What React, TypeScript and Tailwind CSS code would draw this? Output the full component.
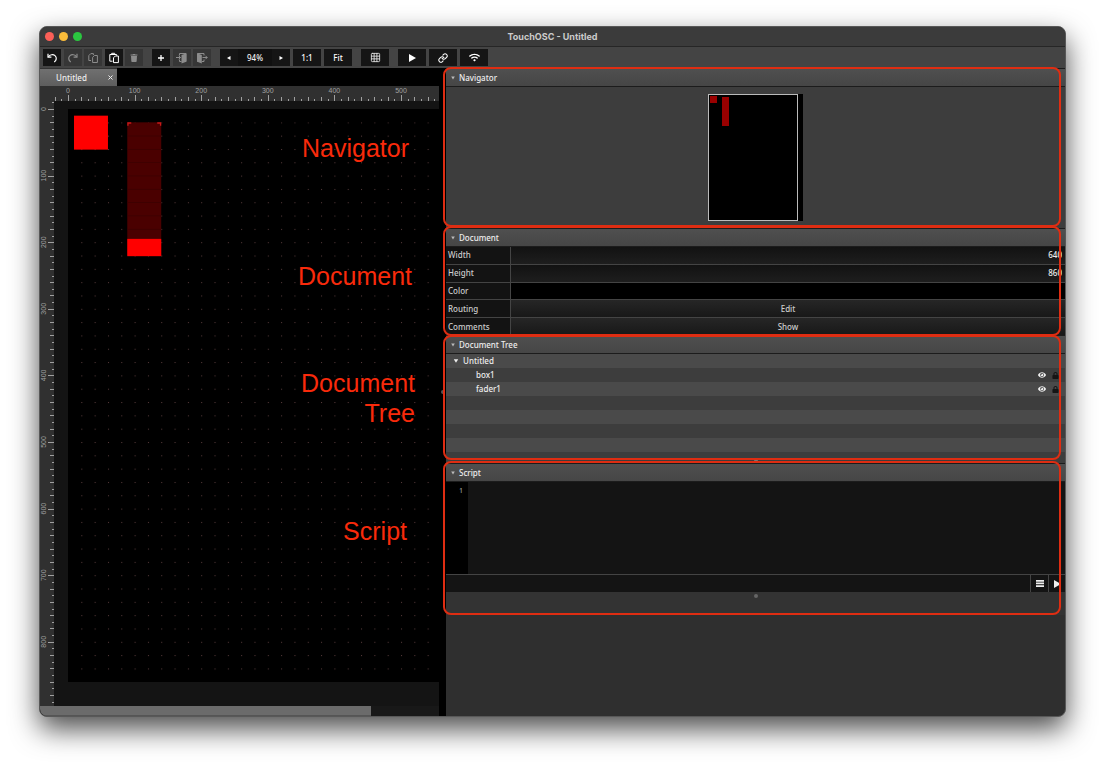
import type { ReactNode } from "react";
import { Grid3x3, Link } from "lucide-react";
import { FaEye, FaLock, FaTrash, FaWifi } from "react-icons/fa";

const SCALE = 0.666;
const DOC_WIDTH = 640;
const DOC_HEIGHT = 860;

const range = (from: number, to: number) =>
  Array.from({ length: to - from + 1 }, (_, i) => from + i);

const tickLength = (step: number) => {
  if (step % 10 === 0) return 6;
  return step % 2 === 0 ? 4 : 2;
};

const UndoIcon = ({ flip = false }: { flip?: boolean }) => (
  <svg
    viewBox="0 0 12 12"
    className={flip ? "w-3 h-3 -scale-x-100" : "w-3 h-3"}
    fill="none"
    stroke="currentColor"
    strokeWidth="1.2"
  >
    <path d="M2 1.8v3.4h3.4" />
    <path d="M2.4 4.8C4 2.6 7 2 9 3.6c2 1.700 1.600 5-.8 6.400" />
  </svg>
);

const CopyIcon = () => (
  <svg viewBox="0 0 12 12" className="w-3 h-3" fill="none" stroke="currentColor">
    <path d="M4 8.500H1.800V3.600L3.800 1.600H6.400V3" />
    <path d="M5.600 10.500V5.400L7.400 3.500H10.400V10.500Z" />
  </svg>
);

const PasteIcon = () => (
  <svg viewBox="0 0 12 12" className="w-3 h-3" fill="none" stroke="currentColor">
    <path d="M4.500 9.200H1.800V2.500H8.600V3.600M3.700 2.500V1.300H6.700V2.500" />
    <path d="M5.500 10.600V5.800L7.300 4H10.400V10.600Z" />
  </svg>
);

const DoorInIcon = () => (
  <svg viewBox="0 0 12 12" className="w-3 h-3" fill="none" stroke="currentColor">
    <path d="M3.500 3.500V1.500H10V9.500H9M3.500 7.500V9.500H5.500" />
    <path d="M5.500 3L10.300 1.300V9.800L5.500 11.500Z" fill="currentColor" stroke="none" />
    <path d="M0 5.500H4.500M2.800 3.800L4.500 5.500L2.800 7.200" />
  </svg>
);

const DoorOutIcon = () => (
  <svg viewBox="0 0 12 12" className="w-3 h-3" fill="none" stroke="currentColor">
    <path d="M8 3.500V1.500H1.500V9.500H3M8 7.500V9.500H6" />
    <path d="M1.200 1.300L5.800 3V11.500L1.200 9.800Z" fill="currentColor" stroke="none" />
    <path d="M6.500 5.500H11.200M9.500 3.800L11.200 5.500L9.500 7.200" />
  </svg>
);

const PlayIcon = () => (
  <svg viewBox="0 0 8 8" className="w-2 h-2" fill="currentColor">
    <path d="M1 0L8 4L1 8Z" />
  </svg>
);

const Arrow = ({ d }: { d: string }) => (
  <svg viewBox="0 0 6 6" className="w-[6px] h-[6px]" fill="currentColor">
    <path d={d} />
  </svg>
);

const LEFT = "M4.500 1V5L1 3Z";
const RIGHT = "M1.500 1V5L5 3Z";
const DOWN = "M0.800 1.200H5.200L3 4.800Z";
const DOWN_SMALL = "M1.200 1.500H4.800L3 4.500Z";

type ToolButtonProps = {
  label: string;
  wide?: boolean;
  disabled?: boolean;
  children: ReactNode;
};

const ToolButton = ({ label, wide, disabled, children }: ToolButtonProps) => (
  <button
    type="button"
    aria-label={label}
    disabled={disabled}
    className={`flex h-[17px] items-center justify-center ${
      wide ? "w-[28px]" : "w-[18px]"
    } ${disabled ? "bg-[#363636] text-[#8c8c8c]" : "bg-[#151515] text-white"}`}
  >
    {children}
  </button>
);

const Toolbar = () => (
  <div className="flex h-[21px] items-center gap-[9px] bg-[#444] pl-[3px]">
    <div className="flex w-[100px] justify-between">
      <ToolButton label="Undo">
        <UndoIcon />
      </ToolButton>
      <ToolButton label="Redo" disabled>
        <UndoIcon flip />
      </ToolButton>
      <ToolButton label="Copy" disabled>
        <CopyIcon />
      </ToolButton>
      <ToolButton label="Paste">
        <PasteIcon />
      </ToolButton>
      <ToolButton label="Delete" disabled>
        <FaTrash size={8} />
      </ToolButton>
    </div>
    <div className="flex w-[59px] justify-between">
      <ToolButton label="Add">
        <svg viewBox="0 0 6 6" className="w-[6px] h-[6px]" stroke="currentColor" strokeWidth="1.300">
          <path d="M3 0V6M0 3H6" />
        </svg>
      </ToolButton>
      <ToolButton label="Import" disabled>
        <DoorInIcon />
      </ToolButton>
      <ToolButton label="Export" disabled>
        <DoorOutIcon />
      </ToolButton>
    </div>
    <div className="flex gap-[3px]">
      <div className="flex h-[17px] items-center bg-[#101010]">
        <ToolButton label="Zoom out">
          <Arrow d={LEFT} />
        </ToolButton>
        <span className="w-[34px] text-center">94%</span>
        <ToolButton label="Zoom in">
          <Arrow d={RIGHT} />
        </ToolButton>
      </div>
      <ToolButton label="Actual size" wide>
        1:1
      </ToolButton>
      <ToolButton label="Fit" wide>
        Fit
      </ToolButton>
    </div>
    <ToolButton label="Grid" wide>
      <Grid3x3 size={11} strokeWidth={2} className="text-[#ddd]" />
    </ToolButton>
    <div className="flex gap-[3px]">
      <ToolButton label="Play" wide>
        <PlayIcon />
      </ToolButton>
      <ToolButton label="Connections" wide>
        <Link size={10} strokeWidth={2.5} />
      </ToolButton>
      <ToolButton label="Network" wide>
        <FaWifi size={11} />
      </ToolButton>
    </div>
  </div>
);

const HorizontalRuler = () => (
  <svg className="block h-[15px] w-full bg-[#303030]" stroke="#a0a0a0">
    {range(-2, 90).map((i) => {
      const x = Math.round(28 + i * 10 * SCALE) + 0.5;
      return <line key={i} x1={x} x2={x} y1={15 - tickLength(i)} y2={15} />;
    })}
    {range(0, 5).map((i) => (
      <text
        key={i}
        x={28 + i * 100 * SCALE}
        y={7}
        textAnchor="middle"
        fill="#a0a0a0"
        stroke="none"
        className="font-['Liberation_Sans',sans-serif] text-[7px]"
      >
        {i * 100}
      </text>
    ))}
  </svg>
);

const VerticalRuler = () => (
  <div className="relative w-[14px] shrink-0 overflow-hidden bg-[#303030]">
    <svg className="absolute inset-0 h-full w-full" stroke="#a0a0a0">
      {range(-1, 120).map((i) => {
        const y = Math.round(8 + i * 10 * SCALE) + 0.5;
        return <line key={i} x1={14 - tickLength(i)} x2={14} y1={y} y2={y} />;
      })}
      {range(0, 8).map((i) => (
        <text
          key={i}
          transform={`translate(6 ${8 + i * 100 * SCALE}) rotate(-90)`}
          textAnchor="middle"
          fill="#a0a0a0"
          stroke="none"
          className="font-['Liberation_Sans',sans-serif] text-[7px]"
        >
          {i * 100}
        </text>
      ))}
    </svg>
  </div>
);

const DocumentCanvas = () => (
  <svg className="block h-[573px] w-full bg-black">
    <defs>
      <pattern id="dots" width="20" height="20" patternUnits="userSpaceOnUse">
        <rect width="1.500" height="1.500" fill="#5a3c3c" />
      </pattern>
    </defs>
    <g transform={`scale(${SCALE})`}>
      <rect x="19" y="20" width={DOC_WIDTH - 20} height={DOC_HEIGHT - 30} fill="url(#dots)" />
      <rect x="9" y="10" width="51" height="51" fill="#f00" />
      <rect x="89" y="20" width="51" height="200" fill="#4a0000" />
      {range(1, 9).map((i) => (
        <rect key={i} x="89" y={20 + i * 20} width="51" height="1" fill="#3a0000" />
      ))}
      <path d="M90 25V21H95M134 21H139V25" fill="none" stroke="#c81818" strokeWidth="2" />
      <rect x="89" y="195" width="51" height="26" fill="#f00" />
    </g>
  </svg>
);

const Annotation = ({ className, children }: { className: string; children: ReactNode }) => (
  <p
    className={`pointer-events-none absolute text-right font-['Liberation_Sans',sans-serif] text-[25px] leading-[30px] text-[#f92a0b] ${className}`}
  >
    {children}
  </p>
);

const Editor = () => (
  <div className="relative flex min-w-0 flex-[406] bg-black">
    <div className="flex min-w-0 flex-1 flex-col">
      <div className="flex h-[18px]">
        <div className="flex w-[77px] items-center border-t border-[#333] bg-linear-to-b from-[#707070] to-[#5e5e5e] pl-4">
          <span className="flex-1">Untitled</span>
          <button type="button" aria-label="Close tab" className="flex w-[13px] justify-center">
            <svg viewBox="0 0 5 5" className="w-[5px] h-[5px]" stroke="currentColor">
              <path d="M0.500 0.500L4.500 4.500M4.500 0.500L0.500 4.500" />
            </svg>
          </button>
        </div>
      </div>
      <HorizontalRuler />
      <div className="flex flex-1 bg-[#141414]">
        <VerticalRuler />
        <div className="min-w-0 flex-1 pt-2 pb-6 pl-[14px]">
          <DocumentCanvas />
        </div>
      </div>
      <div className="h-[10px] bg-[#181818]">
        <div className="h-full w-[83%] border-b border-[#555] bg-[#6b6b6b]" />
      </div>
    </div>
    <div className="flex w-[7px] shrink-0 items-center justify-center">
      <span className="size-1 rounded-full bg-[#555]" />
    </div>
    <Annotation className="top-[65px] right-[37px]">Navigator</Annotation>
    <Annotation className="top-[193px] right-[34px]">Document</Annotation>
    <Annotation className="top-[300px] right-[31px]">
      Document
      <br />
      Tree
    </Annotation>
    <Annotation className="top-[448px] right-[39px]">Script</Annotation>
  </div>
);

type SectionProps = { title: string; outline: string; children: ReactNode };

const Section = ({ title, outline, children }: SectionProps) => (
  <section className="relative">
    <h2>
      <button
        type="button"
        className="flex h-[19px] w-full items-center gap-[3px] border-y border-[#1c1c1c] bg-linear-to-b from-[#4f4f4f] to-[#464646] pl-1"
      >
        <span className="text-[#bbb]">
          <Arrow d={DOWN_SMALL} />
        </span>
        {title}
      </button>
    </h2>
    {children}
    <div
      className={`pointer-events-none absolute -left-[3px] right-1 z-10 rounded-lg border-2 border-[#df2d12] ${outline}`}
    />
  </section>
);

const Navigator = () => (
  <Section title="Navigator" outline="-top-px bottom-px">
    <div className="flex justify-center bg-[#3d3d3d] py-[7px]">
      <svg viewBox="0 0 95 127" className="h-[127px] w-[95px]">
        <rect width="95" height="127" fill="#000" />
        <rect x="2" y="2" width="7" height="7" fill="#990000" />
        <rect x="14" y="3" width="7" height="29" fill="#990000" />
        <rect x="0.500" y="0.500" width="89" height="126" fill="none" stroke="#bbb" />
      </svg>
    </div>
  </Section>
);

const PropertyRow = ({ id, label, children }: { id: string; label: string; children: ReactNode }) => (
  <div className="flex min-h-0 flex-1 border-b border-[#444] last:border-b-0">
    <label
      htmlFor={id}
      className="flex w-[65px] shrink-0 items-center border-r border-[#444] bg-[#131313] pl-[2px] text-[#ccc]"
    >
      {label}
    </label>
    {children}
  </div>
);

const NumberField = ({ id, value }: { id: string; value: number }) => (
  <input
    id={id}
    defaultValue={value}
    className="min-w-0 flex-1 bg-linear-to-b from-[#121212] to-[#1e1e1e] pr-[3px] text-right outline-none"
  />
);

const ActionField = ({ id, text }: { id: string; text: string }) => (
  <button
    id={id}
    type="button"
    className="flex-1 bg-linear-to-b from-[#262626] to-[#181818] text-[#ccc]"
  >
    {text}
  </button>
);

const DocumentPanel = () => (
  <Section title="Document" outline="-top-[2px] -bottom-px">
    <div className="flex h-[88px] flex-col bg-[#131313]">
      <PropertyRow id="doc-width" label="Width">
        <NumberField id="doc-width" value={DOC_WIDTH} />
      </PropertyRow>
      <PropertyRow id="doc-height" label="Height">
        <NumberField id="doc-height" value={DOC_HEIGHT} />
      </PropertyRow>
      <PropertyRow id="doc-color" label="Color">
        <button id="doc-color" type="button" className="flex-1 bg-black" />
      </PropertyRow>
      <PropertyRow id="doc-routing" label="Routing">
        <ActionField id="doc-routing" text="Edit" />
      </PropertyRow>
      <PropertyRow id="doc-comments" label="Comments">
        <ActionField id="doc-comments" text="Show" />
      </PropertyRow>
    </div>
  </Section>
);

const DocumentTree = () => (
  <Section title="Document Tree" outline="top-0 bottom-[3px]">
    <ul>
      <li className="flex h-[14px] items-center gap-1 bg-[#4a4a4a] pl-[7px]">
        <Arrow d={DOWN} />
        Untitled
      </li>
      {["box1", "fader1", "", "", "", ""].map((name, i) => (
        <li
          key={i}
          className="flex h-[14px] items-center pr-[6px] pl-[30px] odd:bg-[#4a4a4a] even:bg-[#3d3d3d]"
        >
          <span className="flex-1">{name}</span>
          {name && (
            <span className="flex items-center gap-[6px]">
              <button type="button" aria-label={`Toggle ${name}`}>
                <FaEye size={8} />
              </button>
              <button type="button" aria-label={`Lock ${name}`} className="text-[#151515]">
                <FaLock size={7} />
              </button>
            </span>
          )}
        </li>
      ))}
    </ul>
    <div className="flex h-[11px] items-end justify-center bg-[#3d3d3d]">
      <span className="size-1 rounded-full bg-[#777]" />
    </div>
  </Section>
);

const ScriptPanel = () => (
  <Section title="Script" outline="-top-[2px] bottom-0">
    <div className="flex h-[92px] bg-[#141414]">
      <div className="w-[22px] shrink-0 bg-black pt-[5px] pr-[5px] text-right text-[7px] leading-2 text-[#999]">
        1
      </div>
      <textarea
        aria-label="Script"
        className="min-w-0 flex-1 resize-none px-1 pt-1 font-['Liberation_Mono',monospace] outline-none"
      />
    </div>
    <div className="flex h-[18px] justify-end border-t border-[#444] bg-[#141414]">
      <button
        type="button"
        aria-label="Script menu"
        className="flex w-[18px] items-center justify-center border-l border-[#444]"
      >
        <svg viewBox="0 0 8 7" className="w-2 h-[7px]" fill="currentColor">
          <path d="M0 0H8V1.700H0ZM0 2.600H8V4.300H0ZM0 5.300H8V7H0Z" />
        </svg>
      </button>
      <button
        type="button"
        aria-label="Run script"
        className="flex w-[17px] items-center justify-center border-l border-[#444]"
      >
        <PlayIcon />
      </button>
    </div>
    <div className="flex h-[23px] justify-center bg-[#333] pt-[2px]">
      <span className="size-1 rounded-full bg-[#666]" />
    </div>
  </Section>
);

const App = () => {
  return (
    <div className="flex min-h-screen flex-col bg-white px-[39px] pt-[26px] pb-[52px] font-['Noto_Sans',sans-serif] text-[8px] leading-3 font-medium text-[#eee]">
      <div className="flex flex-1 flex-col overflow-hidden rounded-lg border border-[#585858] bg-[#2f2f2f] shadow-[0_12px_28px_rgba(0,0,0,0.7)]">
        <header className="relative flex h-5 items-center justify-center border-b border-[#262626] bg-[#3b3b3b]">
          <div className="absolute left-[5px] flex gap-[5px]">
            <span className="size-[9px] rounded-full bg-[#fb5f57]" />
            <span className="size-[9px] rounded-full bg-[#fabc3a]" />
            <span className="size-[9px] rounded-full bg-[#2bc740]" />
          </div>
          <h1 className="font-['Inter',sans-serif] text-[9px] font-bold text-[#ccc]">
            TouchOSC - Untitled
          </h1>
        </header>
        <Toolbar />
        <main className="flex flex-1">
          <Editor />
          <aside className="min-w-0 flex-[619]">
            <Navigator />
            <DocumentPanel />
            <DocumentTree />
            <ScriptPanel />
          </aside>
        </main>
      </div>
    </div>
  );
};

export default App;
